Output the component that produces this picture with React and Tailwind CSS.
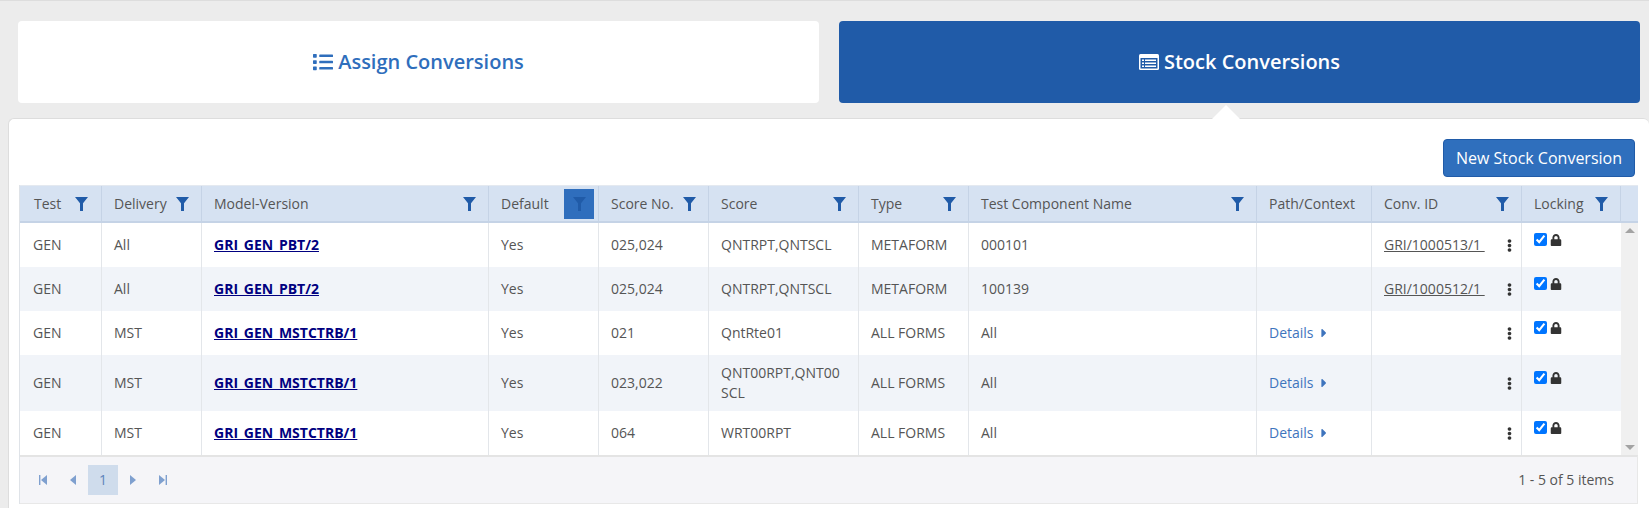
import React from 'react';
import { FaList, FaEllipsisV, FaLock, FaCaretRight } from 'react-icons/fa';

const columns = [
  { label: 'Test', width: 'w-[82px]', filter: 'ml-auto mr-[1px]', pad: 'pl-[14px]' },
  { label: 'Delivery', width: 'w-[100px]', filter: 'ml-auto' },
  { label: 'Model-Version', width: 'w-[287px]', filter: 'ml-auto' },
  { label: 'Default', width: 'w-[110px]', active: true },
  { label: 'Score No.', width: 'w-[110px]', filter: 'ml-auto' },
  { label: 'Score', width: 'w-[150px]', filter: 'ml-auto' },
  { label: 'Type', width: 'w-[110px]', filter: 'ml-auto' },
  { label: 'Test Component Name', width: 'w-[288px]', filter: 'ml-auto' },
  { label: 'Path/Context', width: 'w-[115px]' },
  { label: 'Conv. ID', width: 'w-[150px]', filter: 'ml-auto' },
  { label: 'Locking', width: 'w-[99px]', filter: 'ml-[11px]' },
];

const rows = [
  { delivery: 'All', model: 'GRI_GEN_PBT/2', no: '025,024', score: 'QNTRPT,QNTSCL', type: 'METAFORM', name: '000101', conv: 'GRI/1000513/1' },
  { delivery: 'All', model: 'GRI_GEN_PBT/2', no: '025,024', score: 'QNTRPT,QNTSCL', type: 'METAFORM', name: '100139', conv: 'GRI/1000512/1' },
  { delivery: 'MST', model: 'GRI_GEN_MSTCTRB/1', no: '021', score: 'QntRte01', type: 'ALL FORMS', name: 'All', details: true },
  { delivery: 'MST', model: 'GRI_GEN_MSTCTRB/1', no: '023,022', score: 'QNT00RPT,QNT00SCL', type: 'ALL FORMS', name: 'All', details: true },
  { delivery: 'MST', model: 'GRI_GEN_MSTCTRB/1', no: '064', score: 'WRT00RPT', type: 'ALL FORMS', name: 'All', details: true },
];

function FilterIcon({ className }) {
  return (
    <svg viewBox="0 0 13 14" className={`w-[13px] h-[14px] shrink-0 fill-[#205ba8] ${className || ''}`}>
      <path d="M0 0h13L8 6.2V14H5V6.2z" />
    </svg>
  );
}

function SeekIcon({ dir, bar }) {
  return (
    <svg viewBox="0 0 10 10" className={`w-[10px] h-[10px] fill-[#7fa0cf] ${dir === 'right' ? 'rotate-180' : ''}`}>
      <path d={bar ? 'M9 0v10L3 5z' : 'M8 0v10L2 5z'} />
      {bar && <path d="M1 0h1.4v10H1z" />}
    </svg>
  );
}

function StockIcon() {
  return (
    <svg viewBox="0 0 20 16" className="w-[20px] h-[16px]">
      <rect width="20" height="16" rx="1.5" fill="#ffffff" />
      <rect x="1.5" y="4" width="17" height="10.5" fill="#205ba8" />
      <path d="M3 5.5h2v1.5H3zM3 8.5h2V10H3zM3 11.5h2V13H3zM6 5.5h11v1.5H6zM6 8.5h11V10H6zM6 11.5h11V13H6z" fill="#ffffff" />
    </svg>
  );
}

function Cell({ children, className }) {
  return <td className={`px-3 py-2 border-r border-[#e3e6ea] break-words align-middle ${className || ''}`}>{children}</td>;
}

export default function App() {
  return (
    <div className="h-[508px] overflow-hidden bg-[#ececec] border-t border-[#dddddd] text-[14px] leading-5 text-[#555555] font-['Open_Sans',sans-serif]">
      <div className="flex gap-[20px] pl-[18px] pr-[9px] pt-[20px]">
        <div className="flex-1 h-[82px] flex items-center justify-center gap-[5px] bg-white rounded-[4px] text-[20px] font-semibold text-[#2f6ebc]">
          <FaList size={20} />
          <span>Assign Conversions</span>
        </div>
        <div className="flex-1 h-[82px] flex items-center justify-center gap-[5px] bg-[#205ba8] rounded-[4px] text-[20px] font-semibold text-white">
          <StockIcon />
          <span>Stock Conversions</span>
        </div>
      </div>

      <div className="relative mt-[15px] ml-[8px] h-[400px] bg-white rounded-t-[6px] border-t border-l border-[#dddddd] pl-[10px] pr-[11px] pt-[20px]">
        <div className="absolute -top-[14px] left-[1203px] w-0 h-0 border-l-[14px] border-r-[14px] border-b-[14px] border-transparent border-b-white" />
        <div className="flex justify-end pr-[3px]">
          <button className="h-[38px] px-[12px] bg-[#2f6fbd] border border-[#205ba8] rounded-[4px] text-[16px] text-white">
            New Stock Conversion
          </button>
        </div>

        <div className="mt-[8px] border-l border-[#dfe3e8]">
          <div className="flex bg-[#d6e2f2] border-t border-[#e4e9f0] h-[38px] border-b-2 border-b-[#c5d3e6]">
            {columns.map((col) => (
              <div key={col.label} className={`${col.width} shrink-0 flex items-center ${col.pad || 'pl-3'} pr-[12px] border-r border-[#c5d3e6]`}>
                <span>{col.label}</span>
                {col.filter && <FilterIcon className={col.filter} />}
                {col.active && (
                  <span className="ml-auto -mr-[8px] w-[30px] h-[30px] flex items-center justify-center bg-[#2f6ebd]">
                    <FilterIcon />
                  </span>
                )}
              </div>
            ))}
            <div className="flex-1" />
          </div>

          <div className="flex">
            <table className="table-fixed w-[1601px] border-separate border-spacing-0">
              <colgroup>
                {columns.map((col) => <col key={col.label} className={col.width} />)}
              </colgroup>
              <tbody>
                {rows.map((row, i) => (
                  <tr key={i} className={`h-[44px] ${i % 2 === 1 ? 'bg-[#f1f4f9]' : 'bg-white'}`}>
                    <Cell className="pl-[13px]">GEN</Cell>
                    <Cell>{row.delivery}</Cell>
                    <Cell>
                      <a href="#" className="font-bold underline text-[#000080]">{row.model}</a>
                    </Cell>
                    <Cell>Yes</Cell>
                    <Cell>{row.no}</Cell>
                    <Cell>{row.score}</Cell>
                    <Cell>{row.type}</Cell>
                    <Cell>{row.name}</Cell>
                    <Cell>
                      {row.details && (
                        <a href="#" className="flex items-center gap-[3px] text-[#3e74bd]">
                          Details <FaCaretRight size={14} />
                        </a>
                      )}
                    </Cell>
                    <Cell className="pr-[5px]">
                      <div className="flex items-center justify-between">
                        <span className="underline">{row.conv ? `${row.conv}\u00a0` : ''}</span>
                        <FaEllipsisV size={13} className="text-[#333333]" />
                      </div>
                    </Cell>
                    <td className="px-3 py-2 align-middle">
                      <div className="flex items-center gap-[3px] mb-[12px]">
                        <input type="checkbox" defaultChecked className="w-[13px] h-[13px] m-0" />
                        <FaLock size={12} className="text-[#333333] mt-[2px]" />
                      </div>
                    </td>
                  </tr>
                ))}
              </tbody>
            </table>
            <div className="flex-1 bg-[#f0f0f0] flex flex-col items-center justify-between py-[5px]">
              <div className="w-0 h-0 border-l-[5px] border-r-[5px] border-b-[5px] border-transparent border-b-[#a3a3a3]" />
              <div className="w-0 h-0 border-l-[5px] border-r-[5px] border-t-[5px] border-transparent border-t-[#a3a3a3]" />
            </div>
          </div>

          <div className="h-[49px] flex items-center pl-[8px] pr-[23px] bg-[#f5f5f8] border-t-2 border-t-[#e4e4e4] border-b border-r border-[#e8e8e8] text-[#555555]">
            <span className="w-[30px] h-[30px] flex items-center justify-center"><SeekIcon dir="left" bar /></span>
            <span className="w-[30px] h-[30px] flex items-center justify-center"><SeekIcon dir="left" /></span>
            <span className="w-[30px] h-[30px] flex items-center justify-center bg-[#cfdcec] text-[#5d84bb]">1</span>
            <span className="w-[30px] h-[30px] flex items-center justify-center"><SeekIcon dir="right" /></span>
            <span className="w-[30px] h-[30px] flex items-center justify-center"><SeekIcon dir="right" bar /></span>
            <span className="ml-auto">1 - 5 of 5 items</span>
          </div>
        </div>
      </div>
    </div>
  );
}
